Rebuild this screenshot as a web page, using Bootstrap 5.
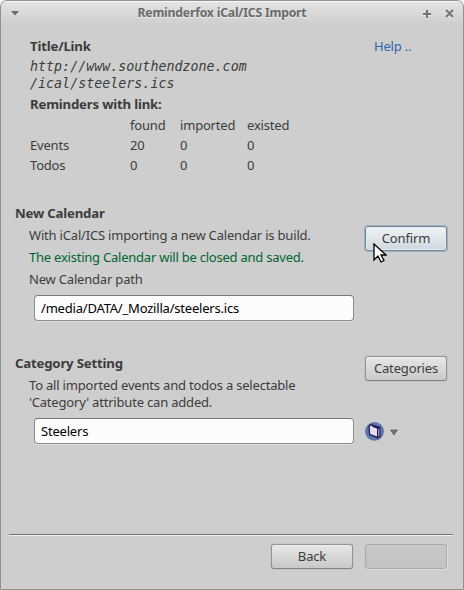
<!DOCTYPE html>
<html lang="en">
<head>
<meta charset="utf-8">
<meta name="viewport" content="width=device-width, initial-scale=1">
<title>Reminderfox iCal/ICS Import</title>
<link href="https://cdn.jsdelivr.net/npm/bootstrap@5.3.0/dist/css/bootstrap.min.css" rel="stylesheet">
<style>
body{background:#f4f4f4;font:13px/20px "Noto Sans","Open Sans",sans-serif;letter-spacing:-.19px;color:#3c3c3c;overflow:hidden}
.win{width:464px;height:590px;background:#cecece;border:1px solid #919191;border-radius:7px 7px 0 0;overflow:hidden}
.titlebar{height:24px;background:linear-gradient(#e4e4e4,#cecece);box-shadow:inset 0 1px #f7f7f7;color:#696969;text-shadow:0 1px #eee;padding:0 6px 0 9px}
.titlebar svg{display:block}
.title-text{font-size:12.2px;line-height:26px;padding-right:7px}
.heading{font-size:13.2px;line-height:20px;font-weight:700}
.top-col{width:325px}
.main-col{width:350px}
.info{padding:11px 0 0 29px;height:175px}
.url{font:italic 13.3px/17px "DejaVu Sans Mono","Liberation Mono",monospace;letter-spacing:.02px;padding:2px 0 2px}
.counts{display:grid;grid-template-columns:100px 50px 67px 60px;line-height:20px;padding-top:1px}
.section-new{height:150px;padding-left:14px}
.section-cat{height:184px;padding-left:14px}
.section-new .heading,.section-cat .heading{padding-top:3px}
.section-new .heading{padding-bottom:1px}
.sub{padding-left:14px}
.line{line-height:22px}
.para{line-height:17px;padding-top:4px}
.saved{color:#00662e;letter-spacing:-.23px}
.help{color:#2f66ad;text-decoration:none;margin-left:19px}
.form-control.field{width:320px;height:26px;min-height:0;margin:5px 0 0 19px;padding:0 6px;font-size:13px;line-height:24px;letter-spacing:-.2px;color:#000;background:#fcfcfc;border:1px solid #8c8c8c;border-top-color:#777;border-radius:4px;box-shadow:0 1px #dedede}
.section-cat .field{margin-top:7px}
.btn.push{width:82px;height:25px;padding:0 0 1px;font-size:13px;line-height:21px;letter-spacing:-.15px;color:#3c3c3c;border:1px solid #949494;border-bottom-color:#858585;border-radius:3px;background:linear-gradient(#e7e7e7,#c9c9c9);box-shadow:inset 0 1px #f0f0f0,0 0 0 1px #c4c4c4}
.section-cat .push{margin-top:6px}
.btn.push.hot{margin-top:2px;border-color:#738799;background:linear-gradient(#f0f3f6,#cfd8df);box-shadow:inset 0 0 0 1px #e4eaf0,0 0 0 1px #a3b0bc}
.btn.push:disabled{opacity:1;background:linear-gradient(#c8c8c8,#c2c2c2);border-color:#a9a9a9;box-shadow:1px 1px #dedede}
.picker{margin-top:40px}
.footer-bar{margin:0 10px 0 8px;border-top:1px solid #727272;box-shadow:inset 0 1px #eee;padding:9px 6px 0 0;gap:12px}
.pointer{left:372px;top:242px}
</style>
<script src="https://cdn.jsdelivr.net/npm/bootstrap@5.3.0/dist/js/bootstrap.bundle.min.js"></script>
</head>
<body>
<main class="win position-relative">
  <header class="titlebar d-flex align-items-center justify-content-between">
    <svg width="26" height="12" viewBox="0 0 26 12"><path d="M1 4h8L5 8.5z" fill="#696969"/></svg>
    <div class="title-text fw-bold">Reminderfox iCal/ICS Import</div>
    <svg width="42" height="12" viewBox="0 0 42 12" fill="none" stroke-width="2"><path d="M8 8h8m-4-4v8M31 4l7 7m0-7l-7 7" stroke="#eee"/><path d="M8 7h8m-4-4v8M31 3l7 7m0-7l-7 7" stroke="#737373"/></svg>
  </header>
  <section class="info d-flex">
    <div class="top-col">
      <div class="heading">Title/Link</div>
      <div class="url">http://www.southendzone.com<br>/ical/steelers.ics</div>
      <div class="heading">Reminders with link:</div>
      <div class="counts">
        <span></span><span>found</span><span>imported</span><span>existed</span>
        <span>Events</span><span>20</span><span>0</span><span>0</span>
        <span>Todos</span><span>0</span><span>0</span><span>0</span>
      </div>
    </div>
    <div><a class="help d-block" href="#">Help ..</a></div>
  </section>
  <section class="section-new d-flex">
    <div class="main-col flex-shrink-0">
      <div class="heading">New Calendar</div>
      <div class="sub line">With iCal/ICS importing a new Calendar is build.</div>
      <div class="sub line saved">The existing Calendar will be closed and saved.</div>
      <div class="sub line">New Calendar path</div>
      <input class="form-control field" value="/media/DATA/_Mozilla/steelers.ics">
    </div>
    <div class="pt-4"><button class="btn push hot">Confirm</button></div>
  </section>
  <section class="section-cat d-flex">
    <div class="main-col flex-shrink-0">
      <div class="heading">Category Setting</div>
      <div class="sub para">To all imported events and todos a selectable<br>'Category' attribute can added.</div>
      <input class="form-control field" value="Steelers">
    </div>
    <div>
      <button class="btn push">Categories</button>
      <div class="picker d-flex align-items-center">
        <svg width="20" height="20" viewBox="0 0 20 20"><circle cx="9.5" cy="10.3" r="9.4" fill="#5e75ae"/><path d="M3.5 5l2.3-2L15.5 6v10L13 17.5 4 14z" fill="#221b4d"/><path d="M4.8 5.6l2-1.2.8 1.6 4.4 1.4v8L5.2 13z" fill="#e7dcef"/><path d="M13.2 8.3l1.2-.8v7.5l-1.2 1z" fill="#b3a3d3"/></svg>
        <svg width="18" height="10" viewBox="0 0 18 10"><path d="M5.5 4h7L9 9z" fill="#777" stroke="#555" stroke-width=".7"/></svg>
      </div>
    </div>
  </section>
  <footer class="footer-bar d-flex justify-content-end">
    <button class="btn push">Back</button><button class="btn push" disabled aria-label="Next"></button>
  </footer>
  <svg class="pointer position-absolute" width="14" height="21" viewBox="0 0 14 21"><path d="M1 1v16l4-4 3 6 3-1.5-3-5.5h5z" fill="#fff" stroke="#000" stroke-width="1.3"/></svg>
</main>
</body>
</html>
